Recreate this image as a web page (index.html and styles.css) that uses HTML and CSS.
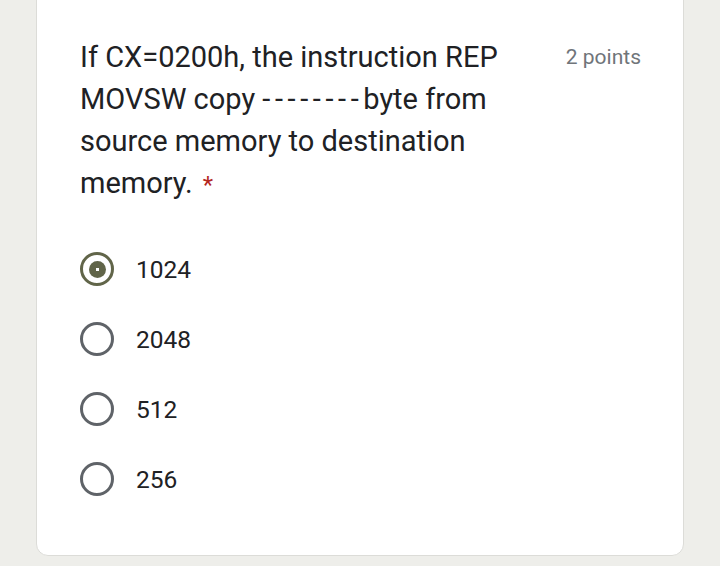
FILE: index.html
```html
<!DOCTYPE html>
<html>
<head>
<meta charset="utf-8">
<link rel="stylesheet" href="styles.css">
</head>
<body>
<div class="card">
  <div class="header">
    <div class="question">If CX=0200h, the instruction REP MOVSW copy <span class="dashes">--------</span>byte from source memory to destination memory.<span class="req">*</span></div>
    <div class="points">2 points</div>
  </div>
  <div class="options">
    <div class="option"><span class="radio checked"><span class="dot"></span></span><span class="label">1024</span></div>
    <div class="option"><span class="radio"></span><span class="label">2048</span></div>
    <div class="option"><span class="radio"></span><span class="label">512</span></div>
    <div class="option"><span class="radio"></span><span class="label">256</span></div>
  </div>
</div>
</body>
</html>
```
FILE: styles.css
```css
html, body {
  margin: 0;
  padding: 0;
  background: #eeeeea;
  font-family: Roboto, "Liberation Sans", sans-serif;
}
.card {
  box-sizing: border-box;
  width: 648px;
  height: 576px;
  margin: -20px 0 0 36px;
  background: #fff;
  border: 1px solid #dcdcd8;
  border-radius: 12px;
  padding: 55px 42px 0 43px;
}
.header {
  display: flex;
  justify-content: space-between;
  align-items: flex-start;
}
.question {
  width: 440px;
  font-size: 29px;
  line-height: 42px;
  color: #202124;
}
.dashes {
  letter-spacing: 4.6px;
}
.req {
  color: #b3261e;
  font-size: 24px;
  margin-left: 10px;
}
.points {
  font-size: 21px;
  line-height: 42px;
  color: #70757a;
}
.options {
  margin-top: 28px;
  display: flex;
  flex-direction: column;
}
.option {
  height: 70px;
  display: flex;
  align-items: center;
}
.radio {
  box-sizing: border-box;
  width: 34px;
  height: 34px;
  border: 3px solid #5f6368;
  border-radius: 50%;
  display: flex;
  align-items: center;
  justify-content: center;
  flex: none;
}
.radio.checked {
  border-color: #616549;
}
.dot {
  width: 17px;
  height: 17px;
  border-radius: 50%;
  background: radial-gradient(circle, #fff 0 1.5px, #616549 2px);
}
.label {
  margin-left: 22px;
  font-size: 24.5px;
  color: #202124;
}
```
